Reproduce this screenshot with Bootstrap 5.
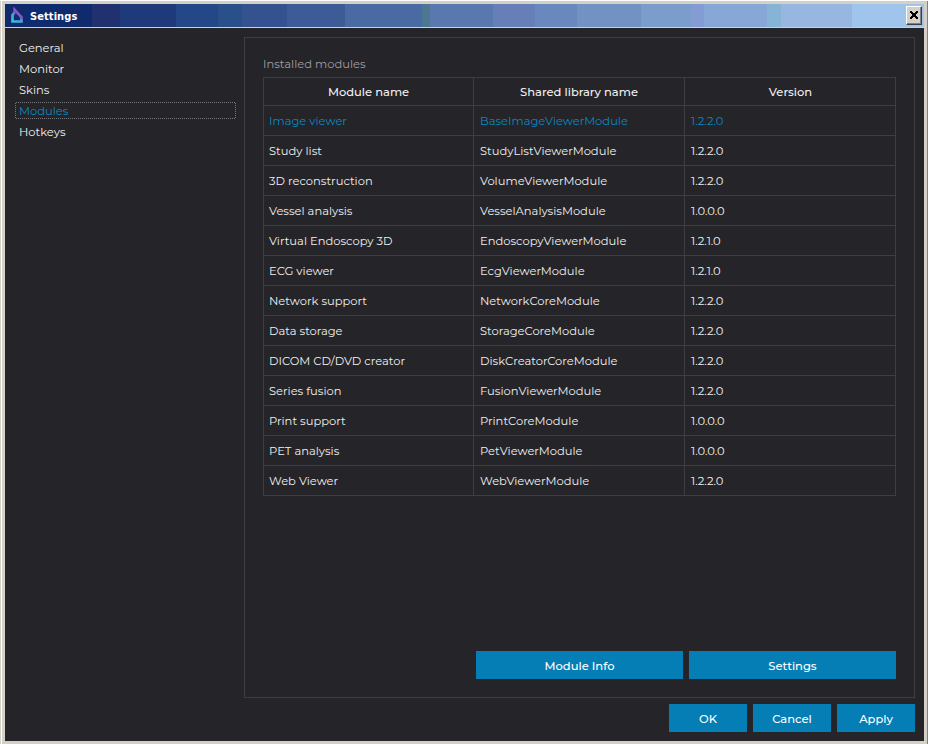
<!DOCTYPE html>
<html lang="en">
<head>
<meta charset="utf-8">
<title>Settings</title>
<link href="https://cdn.jsdelivr.net/npm/bootstrap@5.3.0/dist/css/bootstrap.min.css" rel="stylesheet">
<style>
body{margin:0;background:#d4d0c8;font-family:Montserrat,Inter,sans-serif;font-size:11.5px;line-height:15px;letter-spacing:0;color:#f0f0f0;overflow:hidden}
.window-frame{width:928px;height:744px;background:linear-gradient(90deg,#d4d0c8 1px,#fff 1px 2px,#d4d0c8 2px 927px,#808080 927px);padding:0 4px 3px 5px;border-top:1px solid #fff}
.title-strip{height:26px;border-top:3px solid #d4d0c8;padding:0 2px 0 5px;background:linear-gradient(90deg,#0f2a6d 87px,#21316f 87px 115px,#1e3a7b 115px 171px,#244887 171px 213px,#295088 213px 237px,#34528f 237px 282px,#3d5b97 282px 340px,#496aa3 340px 417px,#4c7790 417px 425px,#5978b0 425px 488px,#667fb8 488px 530px,#6888be 530px 572px,#7292c4 572px 636px,#7b9dcb 636px 686px,#849bd3 686px 699px,#87a8d6 699px 762px,#86b4d6 762px 776px,#98b7e0 776px 847px,#9fc5ed 847px)}
.title-label{font:bold 11px/15px "DejaVu Sans Condensed","DejaVu Sans",sans-serif;letter-spacing:.08px;color:#fff;margin:1px 0 0 6px}
.close-box{width:16px;height:19px;background:#d4d0c8;border:1px solid;border-color:#fff #404040 #404040 #fff;box-shadow:inset -1px -1px #808080;padding:0;display:flex;align-items:flex-start}
.close-box svg{display:block;flex:none;margin:4px 0 0 3px}
.client{height:713px;background:#252428;padding:9px 9px 9px 10px}
.title-edge{height:1px;background:#d4d0c8}
.side{width:221px;padding-top:3px}
.side .nav-link{height:17px;margin-bottom:4px;padding:0 0 0 4px;color:#f0f0f0;line-height:17px;border-radius:0;position:relative}
.side .nav-link.active,.modules .picked td{color:#0588c6}
.focus-line{position:absolute;top:-1px;left:0;width:221px;height:17px}
.group-panel{width:671px;height:661px;border:1px solid #3e3d42;padding:19px 18px 18px}
.group-title{color:#a09fa2;line-height:15px;margin-bottom:5px}
.modules{width:633px;table-layout:fixed;border-collapse:separate;border-spacing:0;border-top:1px solid #3e3d42;border-left:1px solid #3e3d42}
.modules th,.modules td{padding:2px 0 0 6px;border-right:1px solid #3e3d42;border-bottom:1px solid #3e3d42;vertical-align:middle}
.modules th{height:28px;padding:2px 0 0;text-align:center;font-weight:500}
.modules th:last-child{padding-left:1px}
.modules td{height:30px}
.modules td:first-child{padding-left:5px}
.act{background:#057eb6;color:#fff;border:0;border-radius:0;font-size:11.5px;line-height:15px;font-weight:500;height:28px;padding:3px 0 0}
.act:hover{background:#128dc6;color:#fff}
.btn-line{gap:6px}
.wide{width:207px}.short{width:78px}
.bottom-row{margin-top:6px}
</style>
</head>
<body>
<div class="window-frame">
  <header class="title-strip d-flex align-items-center">
    <svg width="14" height="17" viewBox="0 0 14 17">
      <defs><linearGradient id="logo" x1=".1" y1="1" x2=".7" y2="0"><stop stop-color="#36bde0"/><stop offset=".48" stop-color="#559bd0"/><stop offset=".62" stop-color="#7159c4"/><stop offset="1" stop-color="#b34fd1"/></linearGradient></defs>
      <path d="M2.5 14.5V8.2L4.7 5V3L11.5 10.2V14.5Z" fill="none" stroke="url(#logo)" stroke-width="2.7"/>
    </svg>
    <span class="title-label">Settings</span>
    <button class="close-box ms-auto" aria-label="Close"><svg width="8" height="8" viewBox="0 0 8 8" shape-rendering="crispEdges"><path d="M0 0h2v1h1v1h2V1h1V0h2v2H7v1H6v2h1v1h1v2H6V7H5V6H3v1H2v1H0V6h1V5h1V3H1V2H0z" fill="#000"/></svg></button>
  </header>
  <div class="title-edge"></div>
  <main class="client">
    <div class="d-flex justify-content-between">
      <nav class="side nav flex-column flex-nowrap">
        <a class="nav-link">General</a>
        <a class="nav-link">Monitor</a>
        <a class="nav-link">Skins</a>
        <a class="nav-link active">Modules<svg class="focus-line" viewBox="0 0 221 17"><path d="M1 .5H220M1 16.5H220M.5 1V16M220.5 1V16" fill="none" stroke="#77767a" stroke-dasharray="1 1"/></svg></a>
        <a class="nav-link">Hotkeys</a>
      </nav>
      <section class="group-panel d-flex flex-column">
        <div class="group-title"><span>Installed modules</span></div>
        <table class="modules">
          <colgroup><col style="width:210px"><col style="width:211px"><col style="width:211px"></colgroup>
          <thead><tr><th>Module name</th><th>Shared library name</th><th>Version</th></tr></thead>
          <tbody>
            <tr class="picked"><td>Image viewer</td><td>BaseImageViewerModule</td><td>1.2.2.0</td></tr>
            <tr><td>Study list</td><td>StudyListViewerModule</td><td>1.2.2.0</td></tr>
            <tr><td>3D reconstruction</td><td>VolumeViewerModule</td><td>1.2.2.0</td></tr>
            <tr><td>Vessel analysis</td><td>VesselAnalysisModule</td><td>1.0.0.0</td></tr>
            <tr><td>Virtual Endoscopy 3D</td><td>EndoscopyViewerModule</td><td>1.2.1.0</td></tr>
            <tr><td>ECG viewer</td><td>EcgViewerModule</td><td>1.2.1.0</td></tr>
            <tr><td>Network support</td><td>NetworkCoreModule</td><td>1.2.2.0</td></tr>
            <tr><td>Data storage</td><td>StorageCoreModule</td><td>1.2.2.0</td></tr>
            <tr><td>DICOM CD/DVD creator</td><td>DiskCreatorCoreModule</td><td>1.2.2.0</td></tr>
            <tr><td>Series fusion</td><td>FusionViewerModule</td><td>1.2.2.0</td></tr>
            <tr><td>Print support</td><td>PrintCoreModule</td><td>1.0.0.0</td></tr>
            <tr><td>PET analysis</td><td>PetViewerModule</td><td>1.0.0.0</td></tr>
            <tr><td>Web Viewer</td><td>WebViewerModule</td><td>1.2.2.0</td></tr>
          </tbody>
        </table>
        <div class="btn-line d-flex justify-content-end mt-auto">
          <button class="btn act wide">Module Info</button>
          <button class="btn act wide">Settings</button>
        </div>
      </section>
    </div>
    <div class="bottom-row btn-line d-flex justify-content-end">
      <button class="btn act short">OK</button>
      <button class="btn act short">Cancel</button>
      <button class="btn act short">Apply</button>
    </div>
  </main>
</div>
<script src="https://cdn.jsdelivr.net/npm/bootstrap@5.3.0/dist/js/bootstrap.bundle.min.js"></script>
</body>
</html>
